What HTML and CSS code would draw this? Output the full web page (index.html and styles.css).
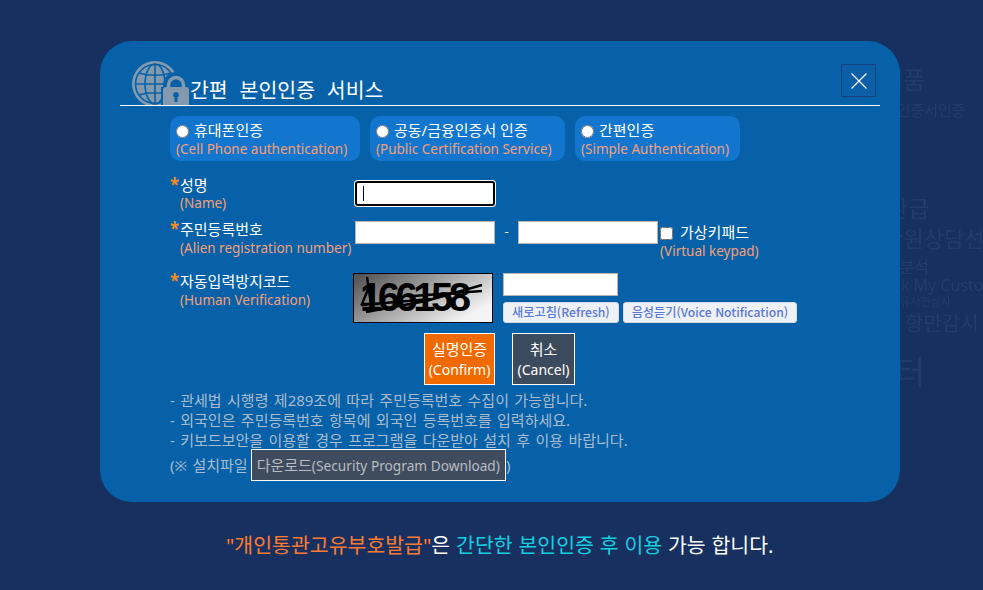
FILE: index.html
```html
<!DOCTYPE html>
<html lang="ko">
<head>
<meta charset="utf-8">
<title>간편 본인인증 서비스</title>
<link rel="stylesheet" href="styles.css">
</head>
<body>
<div class="ghost" aria-hidden="true">
  <span class="g g1">제품</span>
  <span class="g g2">공인인증서인증</span>
  <span class="g g3">환급</span>
  <span class="g g4">세관원상담선</span>
  <span class="g g5">품목분석</span>
  <span class="g g6">Ask My Custo</span>
  <span class="g g7">수출유사전심사</span>
  <span class="g g8">항만감시</span>
  <span class="g g9">센터</span>
</div>
<main class="page">
  <section class="modal">
    <header class="head">
      <svg class="logo" viewBox="0 0 60 50" width="60" height="50" aria-hidden="true">
        <circle cx="25" cy="29" r="23" fill="#8299ae"/>
        <g fill="none" stroke="#0661a9" stroke-width="1.600">
          <circle cx="25" cy="29" r="19.500"/>
          <ellipse cx="25" cy="29" rx="10" ry="20"/>
          <path d="M25 9v40M6 29h38M9 18c9 3 23 3 32 0M9 40c9-3 23-3 32 0"/>
        </g>
        <path d="M31 50V32h2v-2a13 13 0 0 1 26 0v20z" fill="#0661a9"/>
        <path d="M38.500 34v-4a7.500 7.500 0 0 1 15 0v4" fill="none" stroke="#8299ae" stroke-width="3.500"/>
        <path fill-rule="evenodd" fill="#8299ae" d="M36 32h20a3 3 0 0 1 3 3v15H33V35a3 3 0 0 1 3-3zM46 37a3 3 0 0 0-1.500 5.600V47h3v-4.400A3 3 0 0 0 46 37z"/>
      </svg>
      <h1 class="title">간편 본인인증 서비스</h1>
      <button class="close" type="button" aria-label="닫기">
        <svg viewBox="0 0 18 18" width="18" height="18" aria-hidden="true"><path d="M1.500 1.500l15 15M16.500 1.500l-15 15" fill="none" stroke="#fff" stroke-width="1.200"/></svg>
      </button>
    </header>

    <div class="content">
      <div class="tabs">
        <label class="tab t1"><span class="ko"><input type="radio" name="auth">휴대폰인증</span><span class="en">(Cell Phone authentication)</span></label>
        <label class="tab t2"><span class="ko"><input type="radio" name="auth">공동/금융인증서 인증</span><span class="en">(Public Certification Service)</span></label>
        <label class="tab t3"><span class="ko"><input type="radio" name="auth">간편인증</span><span class="en">(Simple Authentication)</span></label>
      </div>

      <div class="row row-name">
        <div class="lab"><span class="ko"><b class="star">*</b>성명</span><span class="en">(Name)</span></div>
        <input class="field focus" type="text" aria-label="성명">
      </div>

      <div class="row row-id">
        <div class="lab"><span class="ko"><b class="star">*</b>주민등록번호</span><span class="en">(Alien registration number)</span></div>
        <input class="field" type="text" aria-label="앞자리">
        <span class="dash">-</span>
        <input class="field" type="text" aria-label="뒷자리">
        <div class="vk">
          <label class="ko"><input type="checkbox">가상키패드</label>
          <span class="en">(Virtual keypad)</span>
        </div>
      </div>

      <div class="row row-cap">
        <div class="lab"><span class="ko"><b class="star">*</b>자동입력방지코드</span><span class="en">(Human Verification)</span></div>
        <svg class="captcha" viewBox="0 0 140 50" width="140" height="50" role="img" aria-label="보안문자">
          <defs><linearGradient id="cg" x1="0" y1="0" x2="1" y2="0.600"><stop offset="0" stop-color="#4c4c4c"/><stop offset="1" stop-color="#f4f4f4"/></linearGradient></defs>
          <rect x="0.500" y="0.500" width="139" height="49" fill="url(#cg)" stroke="#000"/>
          <text x="7" y="38" class="captext">166158</text>
          <path d="M14 4l5 34M16 14L9 31h17M13 39l60-11 56-16M60 23l69-5M8 32l70-6" fill="none" stroke="#000" stroke-width="2.400"/>
        </svg>
        <div class="capside">
          <input class="field short" type="text" aria-label="자동입력방지코드">
          <div class="capbtns">
            <button class="mini" type="button">새로고침(Refresh)</button>
            <button class="mini" type="button">음성듣기(Voice Notification)</button>
          </div>
        </div>
      </div>

      <div class="actions">
        <button class="act confirm" type="button"><span class="hg">실명인증</span><br>(Confirm)</button>
        <button class="act cancel" type="button"><span class="hg">취소</span><br>(Cancel)</button>
      </div>

      <ul class="notes">
        <li>- 관세법 시행령 제289조에 따라 주민등록번호 수집이 가능합니다.</li>
        <li>- 외국인은 주민등록번호 항목에 외국인 등록번호를 입력하세요.</li>
        <li>- 키보드보안을 이용할 경우 프로그램을 다운받아 설치 후 이용 바랍니다.</li>
        <li class="dl">(※ 설치파일<button class="down" type="button"><span class="hg">다운로드</span>(Security Program Download)</button>)</li>
      </ul>
    </div>
  </section>
  <p class="tagline"><span class="or">"개인통관고유부호발급"</span>은 <span class="cy">간단한 본인인증 후 이용</span> 가능 합니다.</p>
</main>
</body>
</html>
```
FILE: styles.css
```css
* { box-sizing: border-box; }
html, body { margin: 0; height: 100%; }
body {
  background: #17305f;
  font-family: "Noto Sans", "Noto Sans CJK KR", sans-serif;
  overflow: hidden;
  position: relative;
}
.ghost { position: absolute; inset: 0; overflow: hidden; color: #223d6b; filter: blur(.5px); }
.g { position: absolute; white-space: nowrap; line-height: 1; }
.g1 { left: 881px; top: 68px; font-size: 24px; }
.g2 { left: 869px; top: 103px; font-size: 15px; }
.g3 { left: 887px; top: 197px; font-size: 23px; }
.g4 { left: 863px; top: 227px; font-size: 22px; }
.g5 { left: 870px; top: 259px; font-size: 16px; }
.g6 { left: 883px; top: 277px; font-size: 16px; }
.g7 { left: 880px; top: 296px; font-size: 11px; }
.g8 { left: 905px; top: 314px; font-size: 20px; }
.g9 { left: 866px; top: 356px; font-size: 32px; }

.page { position: relative; display: flex; flex-direction: column; align-items: flex-start; padding: 41px 0 0 100px; }
.modal {
  width: 800px;
  height: 461px;
  background: #0661a9;
  border-radius: 32px;
  padding: 0 20px;
}
.head {
  position: relative;
  height: 65px;
  border-bottom: 1px solid #fff;
  display: flex;
  align-items: flex-end;
  padding-left: 70px;
}
.logo { position: absolute; left: 10px; bottom: 0; }
.title {
  margin: 0 0 1px;
  font-size: 20.500px;
  line-height: 28px;
  font-weight: 400;
  color: #fff;
  word-spacing: 6.500px;
  position: relative;
}
.close {
  position: absolute;
  right: 4px;
  top: 23px;
  width: 35px;
  height: 33px;
  padding: 0;
  background: #0a5fa6;
  border: 1px solid #17417c;
  display: flex;
  align-items: center;
  justify-content: center;
}
.content { padding: 10px 0 0 50px; }
.ko { display: block; height: 19px; color: #fff; font-size: 15px; line-height: 19px; white-space: nowrap; }
.en { display: block; color: #f39f78; font-size: 13.500px; line-height: 19px; white-space: nowrap; }
.hg { font-size: 15px; }
.tabs { display: flex; gap: 10px; }
.tab {
  height: 45px;
  background: #1376ce;
  border-radius: 10px;
  padding: 5px 6px 0;
}
.t1 { width: 190px; }
.t2 { width: 195px; }
.t3 { width: 165px; }
.tab input { width: 13px; height: 13px; margin: 0 5px 0 0; vertical-align: -2px; }

.row { display: flex; align-items: flex-start; }
.lab { width: 185px; flex: none; padding-left: 10px; }
.lab .ko { margin-left: -10px; }
.star { color: #f58a1f; font-weight: 700; font-size: 17px; line-height: 0; display: inline-block; width: 10px; }
.field {
  width: 140px;
  height: 23px;
  padding: 0;
  background: #fff;
  border: 1px solid #b5b5b5;
  border-radius: 0;
  outline: none;
  flex: none;
}
.focus {
  height: 25px;
  border: 2px solid #000;
  border-radius: 3px;
  box-shadow: 0 0 0 1px #fff;
  background: linear-gradient(#000, #000) 6px 3px / 1px 15px no-repeat #fff;
}
.row-name { margin-top: 15px; }
.row-name .ko { height: 18px; }
.row-name .field { margin-top: 5px; }
.row-id { margin-top: 7px; }
.row-id .field { margin-top: 1px; }
.dash { width: 23px; text-align: center; color: #fff; font-size: 13px; line-height: 22px; flex: none; }
.vk { margin-left: 2px; margin-top: 3px; }
.vk input { width: 13px; height: 13px; margin: 0 7px 0 0; vertical-align: -2px; }
.row-cap { margin-top: 11px; }
.captcha { margin-left: -2px; margin-top: 1px; flex: none; display: block; }
.captext { font: 700 40px/1 "Liberation Sans", sans-serif; letter-spacing: -4.500px; fill: #000; }
.capside { margin-left: 10px; margin-top: 1px; display: flex; flex-direction: column; }
.short { width: 115px; }
.capbtns { display: flex; gap: 4px; margin-top: 6px; }
.mini {
  height: 21px;
  padding: 0 8px;
  background: #eef1f6;
  border: 1px solid #d5dbe6;
  border-radius: 3px;
  color: #5a79d6;
  font: 500 12.200px/19px "Noto Sans CJK KR", sans-serif;
  white-space: nowrap;
}
.actions { display: flex; gap: 17px; margin: 10px 0 0 254px; }
.act {
  height: 52px;
  border: 1px solid #fff;
  border-radius: 0;
  color: #fff;
  font: 400 14px/20px "Noto Sans", "Noto Sans CJK KR", sans-serif;
  padding: 0;
}
.confirm { width: 71px; background: #f06a00; }
.cancel { width: 63px; background: #3c4a5e; }
.notes { list-style: none; margin: 5px 0 0; padding: 0; color: #a9bccd; font-size: 15px; word-spacing: 1.500px; line-height: 20px; }
.dl { display: flex; align-items: center; white-space: nowrap; margin-top: -1px; }
.down {
  height: 32px;
  margin-left: 3px;
  padding: 0 5px;
  background: #3f4c5f;
  border: 1px solid #fff;
  color: #b9bcc0;
  font: 400 13.700px/20px "Noto Sans", "Noto Sans CJK KR", sans-serif;
  word-spacing: 0;
  white-space: nowrap;
}
.tagline { margin: 28px 0 0 126px; font-size: 20.500px; word-spacing: .500px; line-height: 30px; color: #fff; white-space: nowrap; }
.or { color: #ff7a30; }
.cy { color: #15cfe0; }
```
